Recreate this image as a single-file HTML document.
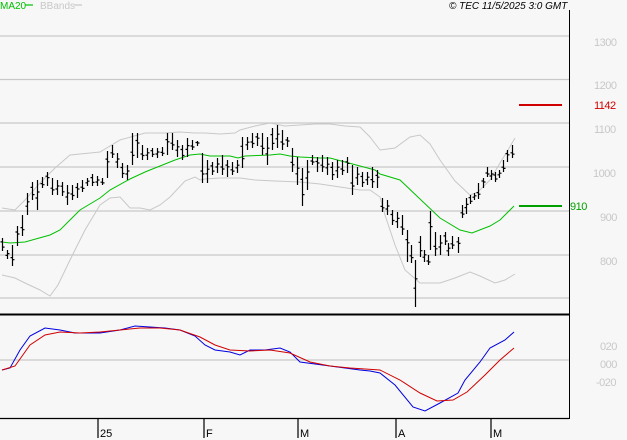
<!DOCTYPE html>
<html><head><meta charset="utf-8"><style>
html,body{margin:0;padding:0;background:#f7f7f7;}
svg{display:block;font-family:"Liberation Sans",sans-serif;}
</style></head><body>
<svg id="c" width="627" height="440" viewBox="0 0 627 440" xmlns="http://www.w3.org/2000/svg">
<rect width="627" height="440" fill="#f7f7f7"/>
<g stroke="#c8c8c8" stroke-width="1.3">
<line x1="0" y1="36" x2="569" y2="36"/><line x1="0" y1="79.5" x2="569" y2="79.5"/>
<line x1="0" y1="123" x2="569" y2="123"/><line x1="0" y1="167" x2="569" y2="167"/>
<line x1="0" y1="211" x2="569" y2="211"/><line x1="0" y1="255" x2="569" y2="255"/>
<line x1="0" y1="298" x2="569" y2="298"/><line x1="0" y1="360" x2="569" y2="360"/>
</g>
<line x1="569.5" y1="10" x2="569.5" y2="419" stroke="#000" stroke-width="1"/>
<line x1="0" y1="314.5" x2="569" y2="314.5" stroke="#000" stroke-width="2"/>
<line x1="0" y1="418.5" x2="569" y2="418.5" stroke="#000" stroke-width="1.3"/>
<g fill="none" stroke="#c8c8c8" stroke-width="1">
<polyline points="2,208 15,210 25,200 40,183 55,168 70,155 90,153 100,152 120,140 145,133 165,133 180,132 195,133 205,133 220,134 235,133 240,130 255,126 270,123 285,126 300,125 315,124 330,124 345,126 360,127 370,137 380,150 395,148 410,137 420,135 430,144 440,160 455,181 470,195 478,192 490,180 500,163 508,150 515,138"/>
<polyline points="2,275 15,278 25,283 40,290 50,296 58,285 70,260 85,230 100,205 110,198 120,197 130,208 140,208 150,210 160,205 170,197 185,181 195,177 200,180 205,179 220,178 240,178 255,180 275,181 300,182 320,184 340,187 360,190 370,190 380,197 385,215 395,245 405,270 420,283 440,283 455,278 470,272 480,276 495,283 505,280 515,274"/>
</g>
<polyline fill="none" stroke="#00c000" stroke-width="1" points="2,242 10,243 25,242 50,235 60,230 70,220 80,210 100,198 110,190 130,179 145,172 160,166 175,160 190,155 200,154 210,156 230,156 238,158 245,156 270,155 280,154 290,156 300,157 320,158 330,158 345,162 360,166 375,170 380,174 400,180 420,199 440,218 460,230 472,233 490,226 500,220 514,206"/>
<path id="bars" fill="none" stroke="#000" stroke-width="1.2" d=""/>
<polyline fill="none" stroke="#0000e0" stroke-width="1" points="2,370 10,368 20,350 30,336 45,328 60,330 75,333 100,333 120,330 135,326 150,327 165,328 180,330 195,336 205,345 215,350 230,352 240,355 250,350 265,350 280,348 290,352 300,362 315,364 330,366 345,368 360,370 370,371 380,373 395,385 413,407 425,411 440,403 458,393 465,380 480,362 490,348 505,340 514,332"/>
<polyline fill="none" stroke="#d00000" stroke-width="1" points="2,370 15,366 30,345 45,335 60,332 80,333 100,332 120,330 140,328 160,328 180,330 200,337 215,345 230,350 250,351 270,350 290,353 310,362 330,366 350,368 380,370 400,380 420,393 437,401 453,400 467,392 485,375 500,360 514,348"/>
<line x1="519" y1="105" x2="562" y2="105" stroke="#d00000" stroke-width="2"/>
<line x1="519" y1="206" x2="562" y2="206" stroke="#00a000" stroke-width="2"/>
<g font-size="11" fill="#c8c8c8" letter-spacing="-0.5">
<text x="594" y="46">1300</text><text x="594" y="89">1200</text><text x="594" y="133">1100</text>
<text x="593" y="177">1000</text><text x="600" y="221">900</text><text x="600" y="265">800</text>
<text x="600" y="350">020</text><text x="600" y="368">000</text><text x="596" y="386">-020</text>
</g>
<text x="594" y="109" font-size="11" fill="#d00000" letter-spacing="-0.5">1142</text>
<text x="570" y="210" font-size="11" fill="#00a000" letter-spacing="-0.5">910</text>
<text x="0" y="9" font-size="10" fill="#00c000">MA20</text>
<line x1="25" y1="5" x2="33" y2="5" stroke="#00c000" stroke-width="1.2"/>
<text x="40" y="9" font-size="10" fill="#c8c8c8">BBands</text>
<line x1="74" y1="5" x2="82" y2="5" stroke="#c8c8c8" stroke-width="1.2"/>
<text x="449" y="9" font-size="10" font-style="italic" fill="#000">© TEC 11/5/2025 3:0 GMT</text>
<g stroke="#000" stroke-width="1.2">
<line x1="98" y1="418" x2="98" y2="438"/><line x1="204" y1="418" x2="204" y2="438"/>
<line x1="298" y1="418" x2="298" y2="438"/><line x1="396" y1="418" x2="396" y2="438"/>
<line x1="491" y1="418" x2="491" y2="438"/>
</g>
<g font-size="11" fill="#000">
<text x="100" y="437">25</text><text x="206" y="437">F</text><text x="300" y="437">M</text>
<text x="398" y="437">A</text><text x="493" y="437">M</text>
</g>
</svg>
<script>
var b=[[2,238,251],[7,250,259],[12,245,266],[17,226,246],[22,215,236],[27,193,215],[32,182,200],[37,180,210],[42,177,188],[47,172,186],[52,178,195],[57,180,195],[62,182,196],[67,185,205],[72,185,200],[77,183,198],[82,180,192],[87,178,186],[92,174,186],[97,176,186],[102,178,185],[107,151,178],[112,145,158],[117,153,168],[122,163,178],[127,165,180],[132,133,165],[137,133,158],[142,145,160],[147,148,160],[152,148,157],[157,148,158],[162,147,156],[167,133,155],[172,133,150],[177,140,157],[182,145,160],[187,138,157],[192,140,150],[197,141,146],[202,153,183],[207,160,183],[212,162,175],[217,158,173],[222,155,175],[227,160,177],[232,162,175],[237,160,173],[242,137,168],[247,137,150],[252,133,148],[257,133,146],[262,133,155],[267,137,165],[272,128,150],[277,125,148],[282,130,150],[287,137,147],[292,148,172],[297,157,185],[302,168,206],[307,160,190],[312,155,165],[317,157,172],[322,155,172],[327,157,175],[332,162,180],[337,160,178],[342,160,175],[347,157,173],[352,165,195],[357,167,185],[362,172,187],[367,172,185],[372,167,188],[377,170,188],[382,198,212],[387,200,215],[392,210,225],[397,212,228],[402,215,235],[407,230,262],[411,245,263],[415,260,307],[420,236,257],[424,250,262],[428,255,265],[430,211,250],[435,232,256],[440,235,255],[445,232,245],[448,243,256],[452,236,249],[458,237,253],[462,205,218],[466,198,214],[470,195,204],[474,193,200],[478,183,199],[483,178,188],[487,167,177],[491,170,180],[495,172,182],[499,170,178],[503,160,172],[507,150,162],[512,145,158]];
var d="";b.forEach(function(a,i){var x=a[0]+0.5,h=a[1],l=a[2],o=h+(l-h)*(i%3==0?0.3:0.6),c=h+(l-h)*(i%2?0.4:0.7);
d+="M"+x+" "+h+"V"+l+"M"+(x-2)+" "+o.toFixed(1)+"H"+x+"M"+x+" "+c.toFixed(1)+"H"+(x+2);});
document.getElementById("bars").setAttribute("d",d);
</script>
</body></html>
